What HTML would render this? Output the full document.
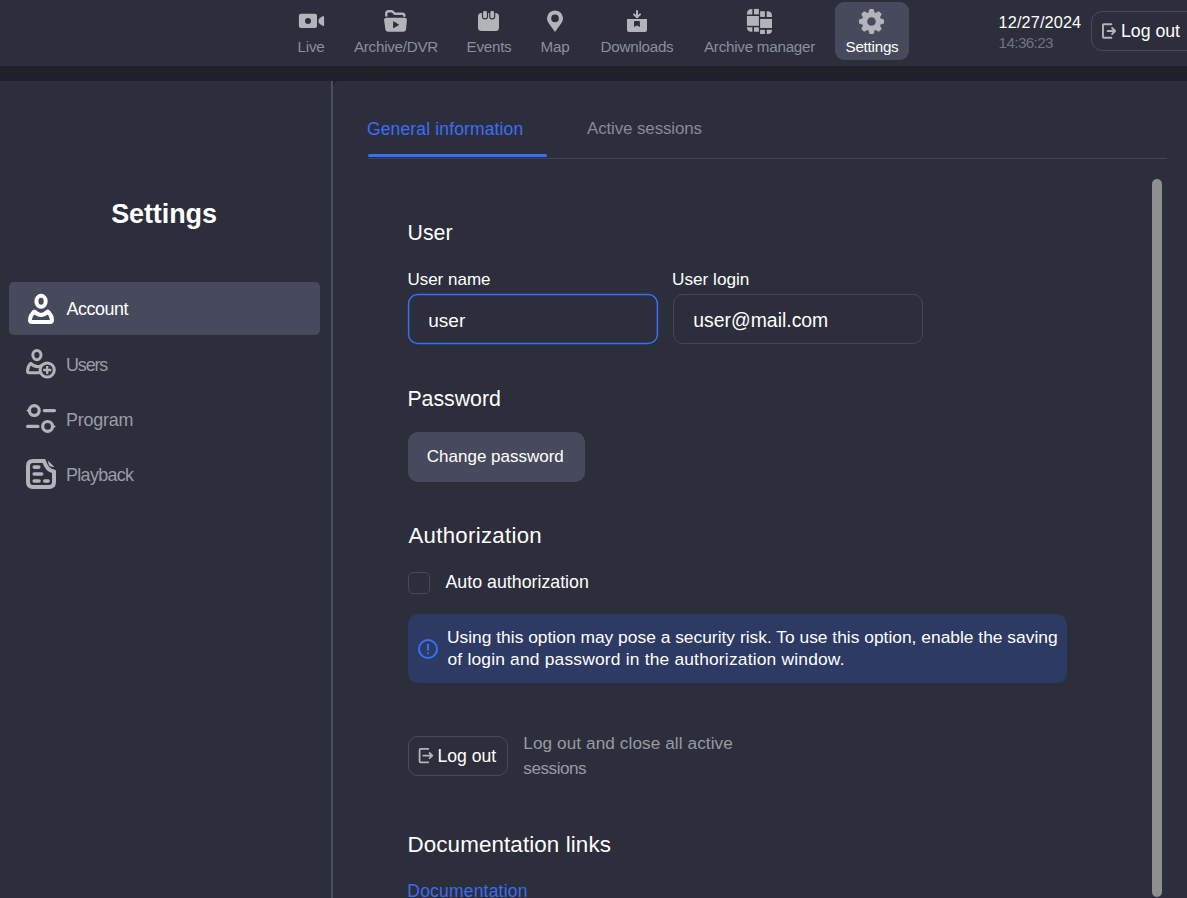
<!DOCTYPE html>
<html><head><meta charset="utf-8">
<style>
*{margin:0;padding:0;box-sizing:border-box}
html,body{width:1187px;height:898px;overflow:hidden;background:#2c2e3b;font-family:"Liberation Sans",sans-serif;color:#fff}
.a{position:absolute}
.t{position:absolute;white-space:nowrap;line-height:1}
#hdr{left:0;top:0;width:1187px;height:66px;background:#2c2e3b}
#band{left:0;top:66px;width:1187px;height:15px;background:#1f2129}
.nl{color:#8a8f9c;font-size:15.2px;letter-spacing:-0.25px;text-align:center;margin-top:-0.6px}
.ic{position:absolute;overflow:visible}
</style></head><body>
<div id="hdr" class="a"></div>
<div id="band" class="a"></div>

<!-- nav -->
<div class="a" style="left:835px;top:2px;width:74px;height:58px;background:#474a5c;border-radius:9px"></div>

<!-- Live camera -->
<svg class="ic" style="left:295px;top:5px" width="35" height="30" viewBox="0 0 35 30">
 <path fill="#b3b4ba" fill-rule="evenodd" d="M6,8.85 H20 Q22,8.85 22,10.85 V21.05 Q22,23.05 20,23.05 H6 Q3.9,23.05 3.9,21.05 V10.85 Q3.9,8.85 6,8.85 Z M13,13 A3,3 0 1 0 13,19 A3,3 0 1 0 13,13 Z"/>
 <path fill="#b3b4ba" d="M27.6,11.3 Q29.1,10.6 29.1,12.3 V19.7 Q29.1,21.4 27.6,20.7 L25.2,19.2 Q23.4,18.2 23.4,16 Q23.4,13.8 25.2,12.8 Z"/>
</svg>
<div class="t nl" style="left:271px;top:39.4px;width:80px">Live</div>

<!-- Archive folder -->
<svg class="ic" style="left:380px;top:5px" width="32" height="30" viewBox="0 0 32 30">
 <path fill="none" stroke="#b3b4ba" stroke-width="2.4" stroke-linecap="round" d="M6.3,10.6 V8.6 Q6.3,6.3 8.6,6.3 H11.5 Q12.3,6.3 12.9,6.9 L14.3,8.3 Q14.8,8.8 15.5,8.8 H22 Q24.4,8.8 24.4,10.8"/>
 <path fill="#b3b4ba" fill-rule="evenodd" d="M6.4,12.7 H24.5 Q27.1,12.7 26.9,15.2 L26,24.6 Q25.8,26.7 23.7,26.7 H7.7 Q5.6,26.7 5.4,24.6 L4.1,15.2 Q3.9,12.7 6.4,12.7 Z M13.1,16.6 V22.4 Q13.1,23.3 13.9,22.9 L18.5,20.2 Q19.2,19.7 18.5,19.2 L13.9,16.5 Q13.1,16 13.1,16.6 Z"/>
</svg>
<div class="t nl" style="left:345px;top:39.4px;width:102px">Archive/DVR</div>

<!-- Events -->
<svg class="ic" style="left:473px;top:5px" width="32" height="30" viewBox="0 0 32 30">
 <rect x="5" y="8" width="21" height="18" rx="3.5" fill="#b3b4ba"/>
 <rect x="9.5" y="5.3" width="5" height="8.6" rx="2.5" fill="#b3b4ba" stroke="#2c2e3b" stroke-width="1.1"/>
 <rect x="16.7" y="5.3" width="5" height="8.6" rx="2.5" fill="#b3b4ba" stroke="#2c2e3b" stroke-width="1.1"/>
</svg>
<div class="t nl" style="left:449px;top:39.4px;width:80px">Events</div>

<!-- Map -->
<svg class="ic" style="left:540px;top:5px" width="32" height="30" viewBox="0 0 32 30">
 <path fill="#b3b4ba" fill-rule="evenodd" d="M15,27 L8.2,17.6 A8,8 0 1 1 21.8,17.6 Z M15,9.6 A3.8,3.8 0 1 0 15,17.2 A3.8,3.8 0 1 0 15,9.6 Z"/>
</svg>
<div class="t nl" style="left:515px;top:39.4px;width:80px">Map</div>

<!-- Downloads -->
<svg class="ic" style="left:621px;top:5px" width="32" height="30" viewBox="0 0 32 30">
 <path fill="#b3b4ba" fill-rule="evenodd" d="M6,14 H26 V24.9 Q26,26.9 24,26.9 H8 Q6,26.9 6,24.9 Z M13,22 V17.1 Q13,16 14.1,16 H17.8 Q18.9,16 18.9,17.1 V22 L15.95,20.5 Z"/>
 <path fill="none" stroke="#b3b4ba" stroke-width="2" stroke-linecap="round" stroke-linejoin="round" d="M16,5.9 V12.3 M13,9.4 L16,12.4 L19,9.4"/>
</svg>
<div class="t nl" style="left:587px;top:39.4px;width:100px">Downloads</div>

<!-- Archive manager -->
<svg class="ic" style="left:743px;top:5px" width="32" height="32" viewBox="0 0 32 32">
 <g fill="#b3b4ba">
  <path d="M3.9,9.4 V8.9 Q3.9,3.9 8.9,3.9 H9.4 V9.4 Z"/>
  <rect x="11" y="3.9" width="4.9" height="5.5"/>
  <rect x="3.9" y="11" width="12" height="9.8"/>
  <path d="M3.9,22.3 H9.4 V26.7 H8.4 Q3.9,26.7 3.9,22.3 Z"/>
  <rect x="11" y="22.3" width="4.9" height="4.4"/>
  <rect x="17.1" y="6.2" width="4.8" height="5.7"/>
  <path d="M23.7,6.2 H24.5 Q29,6.2 29,10.7 V11.9 H23.7 Z"/>
  <rect x="17.1" y="13.9" width="11.9" height="9.1"/>
  <rect x="17.1" y="24.8" width="4.8" height="4.2"/>
  <path d="M23.7,24.8 H29 V25 Q29,29 25,29 H23.7 Z"/>
 </g>
</svg>
<div class="t nl" style="left:699px;top:39.4px;width:121px">Archive manager</div>

<!-- Settings gear -->
<svg class="ic" style="left:856px;top:6px" width="32" height="32" viewBox="0 0 32 32">
 <g transform="translate(15.5,15.5)" fill="#b3b4ba"><circle r="9.6"/><path d="M-3.3,-8 L-2.3,-11.7 Q-2.1,-12.5 -1.3,-12.5 H1.3 Q2.1,-12.5 2.3,-11.7 L3.3,-8 Z" transform="rotate(0)"/><path d="M-3.3,-8 L-2.3,-11.7 Q-2.1,-12.5 -1.3,-12.5 H1.3 Q2.1,-12.5 2.3,-11.7 L3.3,-8 Z" transform="rotate(45)"/><path d="M-3.3,-8 L-2.3,-11.7 Q-2.1,-12.5 -1.3,-12.5 H1.3 Q2.1,-12.5 2.3,-11.7 L3.3,-8 Z" transform="rotate(90)"/><path d="M-3.3,-8 L-2.3,-11.7 Q-2.1,-12.5 -1.3,-12.5 H1.3 Q2.1,-12.5 2.3,-11.7 L3.3,-8 Z" transform="rotate(135)"/><path d="M-3.3,-8 L-2.3,-11.7 Q-2.1,-12.5 -1.3,-12.5 H1.3 Q2.1,-12.5 2.3,-11.7 L3.3,-8 Z" transform="rotate(180)"/><path d="M-3.3,-8 L-2.3,-11.7 Q-2.1,-12.5 -1.3,-12.5 H1.3 Q2.1,-12.5 2.3,-11.7 L3.3,-8 Z" transform="rotate(225)"/><path d="M-3.3,-8 L-2.3,-11.7 Q-2.1,-12.5 -1.3,-12.5 H1.3 Q2.1,-12.5 2.3,-11.7 L3.3,-8 Z" transform="rotate(270)"/><path d="M-3.3,-8 L-2.3,-11.7 Q-2.1,-12.5 -1.3,-12.5 H1.3 Q2.1,-12.5 2.3,-11.7 L3.3,-8 Z" transform="rotate(315)"/><circle r="4.3" fill="#474a5c"/></g>
</svg>
<div class="t nl" style="left:832px;top:39.4px;width:80px;color:#fff">Settings</div>

<!-- date/time -->
<div class="t" style="left:998.6px;top:14.4px;font-size:16.3px;letter-spacing:0.12px;color:#fff">12/27/2024</div>
<div class="t" style="left:998.6px;top:34.8px;font-size:15.2px;letter-spacing:-0.6px;color:#6f7280">14:36:23</div>

<!-- header logout -->
<div class="a" style="left:1091px;top:11px;width:120px;height:40px;border:1px solid #474a5b;border-radius:11px"></div>
<svg class="ic" style="left:1095px;top:15px" width="30" height="30" viewBox="0 0 30 30">
 <path fill="none" stroke="#b3b4ba" stroke-width="1.9" stroke-linecap="round" d="M16.4,9.3 H8.9 Q7.95,9.3 7.95,10.2 V21.8 Q7.95,22.7 8.9,22.7 H16.4"/>
 <path fill="none" stroke="#b3b4ba" stroke-width="1.9" stroke-linecap="round" stroke-linejoin="round" d="M12.6,16 H19.9 M17.1,13 L20.1,16 L17.1,19"/>
</svg>
<div class="t" style="left:1121px;top:22.5px;font-size:17.7px;color:#fff">Log out</div>

<!-- sidebar -->
<div class="a" style="left:333px;top:81px;width:6px;height:5px;background:#1f2129"></div>
<div class="a" style="left:334px;top:81px;width:853px;height:817px;background:#2c2e3b;border-top-left-radius:4px"></div>
<div class="a" style="left:331px;top:81px;width:2px;height:817px;background:#4b4f63"></div>
<div class="t" style="left:0;top:201px;width:328px;text-align:center;font-size:27px;letter-spacing:-0.1px;font-weight:bold;color:#fff">Settings</div>
<div class="a" style="left:9px;top:282px;width:311px;height:53px;background:#474a5c;border-radius:5px"></div>

<svg class="ic" style="left:24px;top:290px" width="34" height="38" viewBox="0 0 34 38">
 <ellipse cx="17.05" cy="11.3" rx="4.65" ry="5.45" fill="none" stroke="#fff" stroke-width="4"/>
 <path fill="none" stroke="#fff" stroke-width="4" stroke-linejoin="round" d="M10.3,21.5 Q17,28.3 23.8,21.5 Q28,25.5 28,30 Q28,32 26,32 H8 Q6,32 6,30 Q6,25.5 10.3,21.5 Z"/>
</svg>
<div class="t" style="left:66.5px;top:301.4px;font-size:17.9px;letter-spacing:-0.45px;color:#fff">Account</div>

<svg class="ic" style="left:22px;top:345px" width="38" height="38" viewBox="0 0 38 38">
 <g fill="none" stroke="#b3b4ba" stroke-width="3" stroke-linecap="round" stroke-linejoin="round">
 <ellipse cx="14.9" cy="10.05" rx="4.1" ry="4.6"/>
 <path d="M17.5,27.7 H7.2 Q5.5,27.7 5.5,26 Q5.5,21.3 8.8,18.4 Q14,23.6 19.5,20.5"/>
 <circle cx="25.2" cy="25" r="7.1"/>
 <path stroke-width="2.3" stroke-linecap="butt" d="M21.1,25 H29.3 M25.2,20.9 V29.1"/>
 </g>
</svg>
<div class="t" style="left:66px;top:357.1px;font-size:17.9px;letter-spacing:-1.1px;color:#9b9ca6">Users</div>

<svg class="ic" style="left:22px;top:400px" width="38" height="38" viewBox="0 0 38 38">
 <g fill="none" stroke="#b3b4ba" stroke-width="3.2" stroke-linecap="round">
 <circle cx="12.3" cy="10.6" r="4.9"/>
 <circle cx="25.6" cy="26.4" r="4.9"/>
 <path stroke-width="3.4" d="M22.4,10.6 H32.4 M5.7,26.4 H15.9"/>
 </g>
 <path fill="#b3b4ba" d="M4.2,10.6 L7,8.6 V12.6 Z M33.9,26.4 L31.1,24.4 V28.4 Z"/>
</svg>
<div class="t" style="left:66px;top:412.1px;font-size:17.9px;letter-spacing:-0.18px;color:#9b9ca6">Program</div>

<svg class="ic" style="left:22px;top:455px" width="38" height="38" viewBox="0 0 38 38">
 <g fill="none" stroke="#b3b4ba" stroke-linecap="round">
 <path stroke-width="4" d="M22,6 H11 Q6,6 6,11 V27 Q6,32 11,32 H27 Q32,32 32,27 V16.5 Q25,16 22,6 Z" stroke-linejoin="round"/>
 <path stroke-width="3.6" d="M12.2,12.1 H16.8 M12.2,19 H19.6 M12.2,26 H17 M22.8,26 H26.1"/>
 </g>
 <path fill="#b3b4ba" d="M26.2,5.8 L32.4,11.9 Q25.6,13 26.2,5.8 Z"/>
</svg>
<div class="t" style="left:66px;top:466.8px;font-size:17.9px;letter-spacing:-0.65px;color:#9b9ca6">Playback</div>

<!-- tabs -->
<div class="t" style="left:367px;top:121px;font-size:17.5px;letter-spacing:0.14px;color:#3a6ef8">General information</div>
<div class="t" style="left:587px;top:121.2px;font-size:16.9px;letter-spacing:-0.1px;color:#888a95">Active sessions</div>
<div class="a" style="left:368px;top:158px;width:799px;height:1px;background:#40435a"></div>
<div class="a" style="left:368px;top:154px;width:179px;height:3px;background:#356ffa;border-radius:2px"></div>

<!-- scrollbar -->
<div class="a" style="left:1152px;top:179px;width:10px;height:718px;background:#8f8f8f;border-radius:5px"></div>

<!-- User -->
<div class="t" style="left:407.6px;top:222.7px;font-size:21.3px">User</div>
<div class="t" style="left:407.4px;top:271px;font-size:17px">User name</div>
<svg class="ic" style="left:407px;top:293px" width="252" height="52"><rect x="1.6" y="1.6" width="248.8" height="48.8" rx="9" fill="none" stroke="#3470fc" stroke-width="1.5"/></svg>
<div class="t" style="left:428.3px;top:310.9px;font-size:19px">user</div>
<div class="t" style="left:672px;top:271px;font-size:17.2px">User login</div>
<div class="a" style="left:673px;top:294px;width:250px;height:50px;border:1px solid #45485a;border-radius:10px"></div>
<div class="t" style="left:693.3px;top:310.9px;font-size:19.4px">user@mail.com</div>

<!-- Password -->
<div class="t" style="left:407.4px;top:389px;font-size:21.3px">Password</div>
<div class="a" style="left:408px;top:432px;width:177px;height:50px;background:#474a5c;border-radius:10px"></div>
<div class="t" style="left:426.8px;top:448.2px;font-size:17px">Change password</div>

<!-- Authorization -->
<div class="t" style="left:408.5px;top:525px;font-size:22.2px;letter-spacing:0.3px">Authorization</div>
<div class="a" style="left:408px;top:572px;width:22px;height:22px;border:1px solid #464959;border-radius:5px"></div>
<div class="t" style="left:445.5px;top:574px;font-size:17.8px">Auto authorization</div>

<div class="a" style="left:408px;top:614px;width:659px;height:69px;background:#2d3a63;border-radius:10px"></div>
<svg class="ic" style="left:412px;top:634px" width="32" height="30" viewBox="0 0 32 30">
 <circle cx="16" cy="15" r="9" fill="none" stroke="#3570f8" stroke-width="2"/>
 <rect x="15" y="10" width="2" height="6.7" fill="#3570f8"/>
 <rect x="15" y="18.5" width="2" height="1.6" fill="#3570f8"/>
</svg>
<div class="t" style="left:447px;top:628.7px;font-size:17.4px">Using this option may pose a security risk. To use this option, enable the saving</div>
<div class="t" style="left:447.5px;top:651px;font-size:17.4px;letter-spacing:0.19px">of login and password in the authorization window.</div>

<!-- Log out -->
<div class="a" style="left:408px;top:736px;width:100px;height:40px;border:1px solid #484b5d;border-radius:10px"></div>
<svg class="ic" style="left:412px;top:742px" width="26" height="26" viewBox="0 0 26 26">
 <path fill="none" stroke="#b3b4ba" stroke-width="1.8" stroke-linecap="round" d="M16.3,6.9 H8.5 Q7.6,6.9 7.6,7.8 V19.4 Q7.6,20.3 8.5,20.3 H16.3"/>
 <path fill="none" stroke="#b3b4ba" stroke-width="1.8" stroke-linecap="round" stroke-linejoin="round" d="M11.3,13.6 H20.2 M17.6,11 L20.3,13.6 L17.6,16.2"/>
</svg>
<div class="t" style="left:437.4px;top:748px;font-size:17.6px">Log out</div>
<div class="t" style="left:523.3px;font-size:17.2px;letter-spacing:0.08px;color:#979aa3;line-height:24.6px;top:731.3px">Log out and close all active<br><span style="letter-spacing:-0.5px">sessions</span></div>

<!-- Documentation -->
<div class="t" style="left:407.5px;top:833.5px;font-size:22.4px;letter-spacing:0.1px">Documentation links</div>
<div class="t" style="left:407.3px;top:882.7px;font-size:17.5px;letter-spacing:0.2px;color:#3a6df0">Documentation</div>


</body></html>
